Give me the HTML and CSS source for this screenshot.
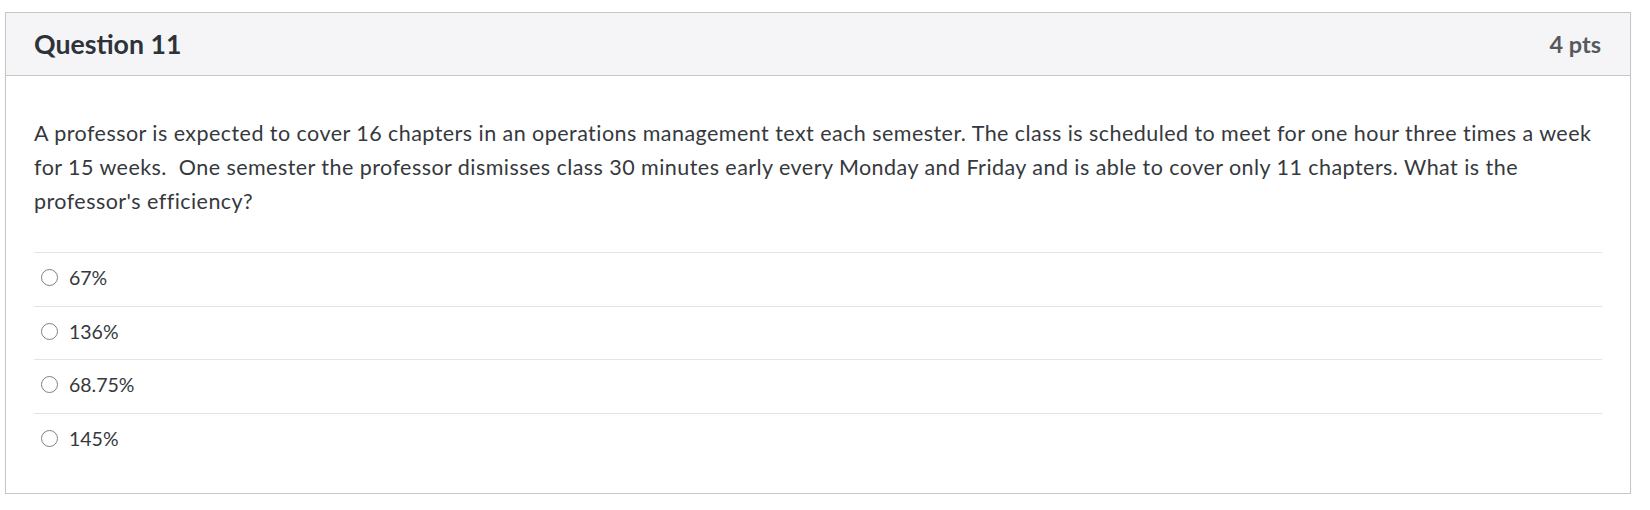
FILE: index.html
```html
<!DOCTYPE html>
<html lang="en">
<head>
<meta charset="utf-8">
<title>Question 11</title>
<link rel="stylesheet" href="styles.css">
</head>
<body>
<div class="card">
  <div class="card-header">
    <span class="q-title">Question 11</span>
    <span class="q-points">4 pts</span>
  </div>
  <div class="card-body">
    <p class="q-text">A professor is expected to cover 16 chapters in an operations management text each semester. The class is scheduled to meet for one hour three times a week for 15 weeks.&nbsp; One semester the professor dismisses class 30 minutes early every Monday and Friday and is able to cover only 11 chapters. What is the professor's efficiency?</p>
    <div class="answers">
      <label class="answer"><span class="radio"></span><span class="answer-text">67%</span></label>
      <label class="answer"><span class="radio"></span><span class="answer-text">136%</span></label>
      <label class="answer"><span class="radio"></span><span class="answer-text">68.75%</span></label>
      <label class="answer"><span class="radio"></span><span class="answer-text">145%</span></label>
    </div>
  </div>
</div>
</body>
</html>
```

FILE: styles.css
```css
html, body {
  margin: 0;
  padding: 0;
  background: #ffffff;
}
body {
  font-family: Lato, "Open Sans", "Liberation Sans", sans-serif;
  color: #2d3b45;
}
.card {
  margin: 12px 0 0 5px;
  width: 1624px;
  border: 1px solid #c4c6c8;
  box-shadow: 0 1px 1px rgba(0,0,0,0.08);
}
.card-header {
  height: 62px;
  background: #f5f5f7;
  border-bottom: 1px solid #c4c6c8;
  display: flex;
  align-items: center;
  justify-content: space-between;
  padding: 0 29px 0 28px;
}
.q-title {
  font-size: 26.7px;
  font-weight: 700;
  color: #2d3339;
}
.q-points {
  font-size: 23.5px;
  font-weight: 700;
  color: #565a5e;
}
.card-body {
  padding: 0 28px 27px 28px;
}
.q-text {
  margin: 40px 0 34px 0;
  font-size: 21.5px;
  letter-spacing: 0.45px;
  line-height: 34px;
  color: #35393d;
}
.answers {
  display: flex;
  flex-direction: column;
}
.answer {
  box-sizing: border-box;
  height: 53.5px;
  padding-bottom: 3px;
  border-top: 1px solid #e3e4e6;
  display: flex;
  align-items: center;
  font-size: 19.5px;
  color: #35393d;
}
.radio {
  width: 15px;
  height: 15px;
  border: 1px solid #7d8184;
  border-radius: 50%;
  margin-left: 7px;
  margin-right: 11px;
  background: #fff;
  flex: none;
}
```
